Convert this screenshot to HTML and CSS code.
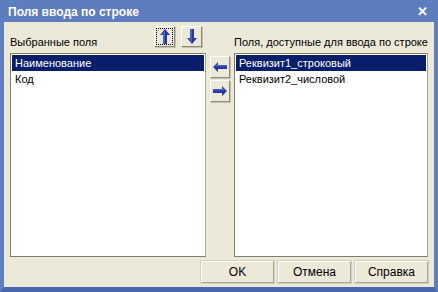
FILE: index.html
```html
<!DOCTYPE html>
<html lang="ru">
  <head>
    <meta charset="UTF-8" />
    <title>Поля ввода по строке</title>
    <link rel="stylesheet" href="styles.css">
  </head>
  <body>
    <div class="window">
      <div class="titlebar">
        <span class="title">Поля ввода по строке</span>
        <span class="close">&#10005;</span>
      </div>

      <div class="content">
        <!-- header row -->
        <div class="head head-left">
          <span class="label">Выбранные поля</span>
          <div class="order">
            <button class="tool focused" title="Вверх">
              <svg width="10" height="15" viewBox="0 0 10 15"><polygon points="5,0 10,6 7,6 7,15 3,15 3,6 0,6" fill="#26389a"/><polygon points="5,1 5,15 3,15 3,6 1,6" fill="#4a5cc0"/></svg>
            </button>
            <button class="tool" title="Вниз">
              <svg width="10" height="15" viewBox="0 0 10 15"><polygon points="3,0 7,0 7,9 10,9 5,15 0,9 3,9" fill="#26389a"/><polygon points="3,0 5,0 5,14 1,9 3,9" fill="#4a5cc0"/></svg>
            </button>
          </div>
        </div>
        <div class="head-mid"></div>
        <div class="head">
          <span class="label">Поля, доступные для ввода по строке</span>
        </div>

        <!-- lists -->
        <ul class="list">
          <li class="selected">Наименование</li>
          <li>Код</li>
        </ul>
        <div class="move">
          <button class="tool tall" title="Добавить">
            <svg width="14" height="10" viewBox="0 0 14 10"><polygon points="0,5 5,0 5,3 14,3 14,7 5,7 5,10" fill="#26389a"/><polygon points="1,5 5,1 5,3 14,3 14,4.5 1.5,4.5" fill="#4a5cc0"/></svg>
          </button>
          <button class="tool tall" title="Удалить">
            <svg width="14" height="10" viewBox="0 0 14 10"><polygon points="14,5 9,0 9,3 0,3 0,7 9,7 9,10" fill="#26389a"/><polygon points="13,5 9,1 9,3 0,3 0,4.5 12.5,4.5" fill="#4a5cc0"/></svg>
          </button>
        </div>
        <ul class="list">
          <li class="selected">Реквизит1_строковый</li>
          <li>Реквизит2_числовой</li>
        </ul>
      </div>

      <div class="footer">
        <button class="btn">OK</button>
        <button class="btn">Отмена</button>
        <button class="btn">Справка</button>
      </div>
    </div>
  </body>
</html>
```

FILE: styles.css
```css
/* Dialog window */
body {
  margin: 0;
  font-family: "Liberation Sans", Arial, sans-serif;
  font-size: 11px;
  color: #000;
}

.window {
  width: 438px;
  height: 292px;
  box-sizing: border-box;
  background-color: #ece9d8;
  border-left: 4px solid #5f7fc0;
  border-right: 4px solid #5f7fc0;
  border-bottom: 5px solid #4a68ad;
  display: flex;
  flex-direction: column;
}

.titlebar {
  height: 22px;
  margin: 0 -4px;
  padding: 1px 8px 0 8px;
  box-sizing: border-box;
  background-color: #5d7dbe;
  display: flex;
  align-items: center;
  justify-content: space-between;
  color: #fff;
}

.title {
  font-weight: bold;
  font-size: 12px;
}

.close {
  font-weight: bold;
  font-size: 13px;
  margin-right: 2px;
}

/* Main grid: left list, move buttons, right list */
.content {
  display: grid;
  grid-template-columns: 196px 28px 194px;
  grid-template-rows: 31px 204px;
  padding: 0 6px;
}

.head {
  display: flex;
  align-items: flex-end;
  justify-content: space-between;
  padding-bottom: 4px;
}

.head-left .order {
  display: flex;
  gap: 6px;
  margin-right: 4px;
  margin-bottom: 2px;
}

.label {
  line-height: 13px;
}

.tool {
  width: 21px;
  height: 21px;
  padding: 0;
  margin: 0;
  background-color: #ece9d8;
  border: 1px solid;
  border-color: #fff #8d8a78 #8d8a78 #fff;
  box-shadow: 1px 1px 0 #c4c1b0;
  display: flex;
  align-items: center;
  justify-content: center;
  position: relative;
}

.tool.tall {
  width: 20px;
  height: 22px;
}

.tool.focused::after {
  content: "";
  position: absolute;
  inset: 1px;
  border: 1px dotted #000;
}

/* List boxes */
.list {
  list-style: none;
  margin: 0;
  padding: 1px;
  background-color: #fff;
  border: 1px solid #7f7c6a;
  border-right-color: #a9a693;
}

.list li {
  height: 16px;
  line-height: 16px;
  padding-left: 3px;
}

.list .selected {
  background-color: #0a1f6b;
  color: #fff;
}

.move {
  display: flex;
  flex-direction: column;
  align-items: center;
  gap: 2px;
  padding-top: 3px;
}

/* Bottom buttons */
.footer {
  display: flex;
  justify-content: flex-end;
  gap: 4px;
  padding: 4px 6px 0 0;
}

.btn {
  width: 73px;
  height: 22px;
  margin: 0;
  padding: 0;
  font-family: "Liberation Sans", Arial, sans-serif;
  font-size: 12px;
  font-weight: normal;
  color: #000;
  background-color: #ece9d8;
  border: 1px solid;
  border-color: #fff #aca899 #aca899 #fff;
  box-shadow: 0 0 0 1px #d2cfbe;
}
```
